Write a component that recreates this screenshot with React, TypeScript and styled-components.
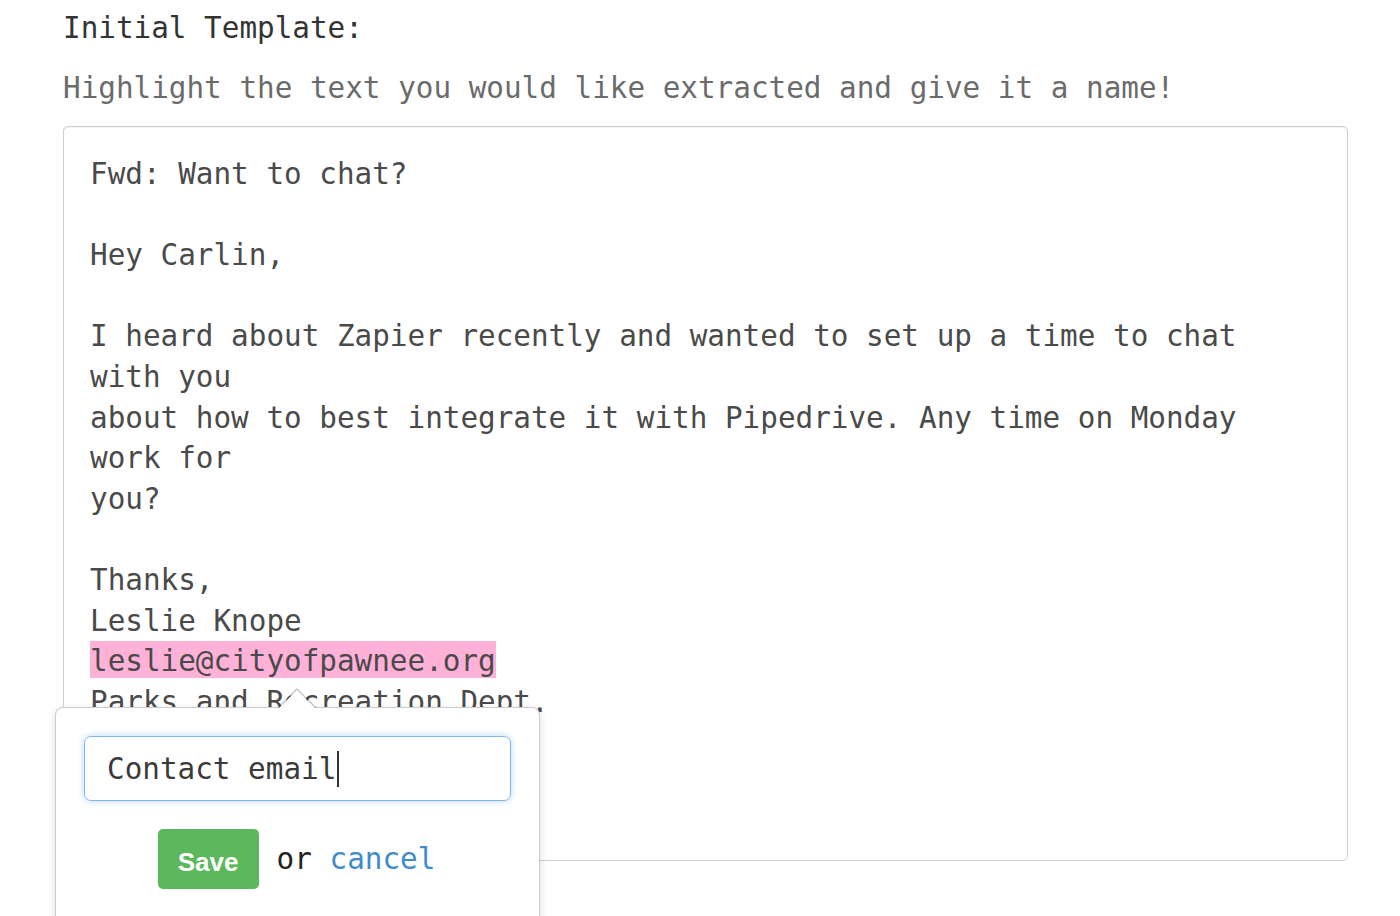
import React from "react";
import styled, { createGlobalStyle } from "styled-components";

const Global = createGlobalStyle`
  html, body { margin: 0; padding: 0; background: #fff; }
  body { font-family: "DejaVu Sans Mono", "Liberation Mono", monospace; }
`;

const MONO = `"DejaVu Sans Mono", "Liberation Mono", monospace`;

const Page = styled.div`
  box-sizing: border-box;
  padding: 8px 0 0 63px;
  width: 1400px;
  height: 916px;
  overflow: hidden;
  font-family: ${MONO};
  font-size: 29.3px;
`;

const Title = styled.div`
  color: #333;
  line-height: 40px;
  height: 40px;
`;

const Subtitle = styled.div`
  color: #6b6b6b;
  line-height: 40px;
  height: 40px;
  margin-top: 20px;
`;

const BoxWrap = styled.div`
  position: relative;
  margin-top: 18px;
  width: 1285px;
`;

const Box = styled.div`
  box-sizing: border-box;
  width: 1285px;
  height: 735px;
  border: 1px solid #cfcfcf;
  border-radius: 5px;
  box-shadow: inset 0 1px 1px rgba(0, 0, 0, 0.06);
  padding: 27px 25px 27px 26px;
  overflow: hidden;
  color: #4a4a4a;
`;

const Line = styled.div`
  white-space: pre;
  line-height: 40.6px;
  height: 40.6px;
`;

const Highlight = styled.span`
  background: #ffb1d8;
  padding: 3px 0 0;
`;

const Popover = styled.div`
  position: absolute;
  left: -8px;
  top: 581px;
  width: 485px;
  height: 240px;
  box-sizing: border-box;
  background: #fff;
  border: 1px solid rgba(0, 0, 0, 0.2);
  border-radius: 8px;
  box-shadow: 0 3px 8px rgba(0, 0, 0, 0.15);
  padding: 28px 28px 0 28px;
  display: flex;
  flex-direction: column;
  align-items: stretch;

  &::before,
  &::after {
    content: "";
    position: absolute;
    left: 241px;
    border-style: solid;
    border-color: transparent;
    width: 0;
    height: 0;
  }
  &::before {
    top: -20px;
    margin-left: -20px;
    border-width: 0 20px 20px 20px;
    border-bottom-color: rgba(0, 0, 0, 0.22);
  }
  &::after {
    top: -18px;
    margin-left: -19px;
    border-width: 0 19px 19px 19px;
    border-bottom-color: #fff;
  }
`;

const Field = styled.div`
  box-sizing: border-box;
  height: 65px;
  width: 427px;
  border: 1.5px solid #7fb5e8;
  border-radius: 7px;
  box-shadow: 0 0 6px rgba(102, 175, 233, 0.5);
  padding: 0 22px;
  display: flex;
  align-items: center;
  color: #3a3a3a;
  font-size: 29.3px;
  white-space: pre;
`;

const Caret = styled.span`
  display: inline-block;
  width: 2px;
  height: 36px;
  background: #333;
  margin-left: 1px;
`;

const Actions = styled.div`
  margin-top: 28px;
  display: flex;
  align-items: center;
  justify-content: center;
  padding-right: 2px;
`;

const SaveButton = styled.button`
  height: 60px;
  width: 101px;
  border: none;
  border-radius: 5px;
  background: #5cb85c;
  color: #fff;
  font-family: "Liberation Sans", Arial, sans-serif;
  font-weight: bold;
  font-size: 26px;
  padding: 6px 0 0;
  margin-right: 18px;
  cursor: pointer;
`;

const OrText = styled.span`
  color: #222;
  white-space: pre;
  font-size: 29.3px;
`;

const CancelLink = styled.a`
  color: #428bca;
  text-decoration: none;
  cursor: pointer;
`;

const lines: React.ReactNode[] = [
  "Fwd: Want to chat?",
  "",
  "Hey Carlin,",
  "",
  "I heard about Zapier recently and wanted to set up a time to chat",
  "with you",
  "about how to best integrate it with Pipedrive. Any time on Monday",
  "work for",
  "you?",
  "",
  "Thanks,",
  "Leslie Knope",
  <Highlight key="h">leslie@cityofpawnee.org</Highlight>,
  "Parks and Recreation Dept.",
  "City of Pawnee",
];

export default function App() {
  return (
    <>
      <Global />
      <Page>
        <Title>Initial Template:</Title>
        <Subtitle>Highlight the text you would like extracted and give it a name!</Subtitle>
        <BoxWrap>
          <Box>
            {lines.map((l, i) => (
              <Line key={i}>{l === "" ? " " : l}</Line>
            ))}
          </Box>
          <Popover>
            <Field>
              Contact email
              <Caret />
            </Field>
            <Actions>
              <SaveButton>Save</SaveButton>
              <OrText>
                or <CancelLink>cancel</CancelLink>
              </OrText>
            </Actions>
          </Popover>
        </BoxWrap>
      </Page>
    </>
  );
}
